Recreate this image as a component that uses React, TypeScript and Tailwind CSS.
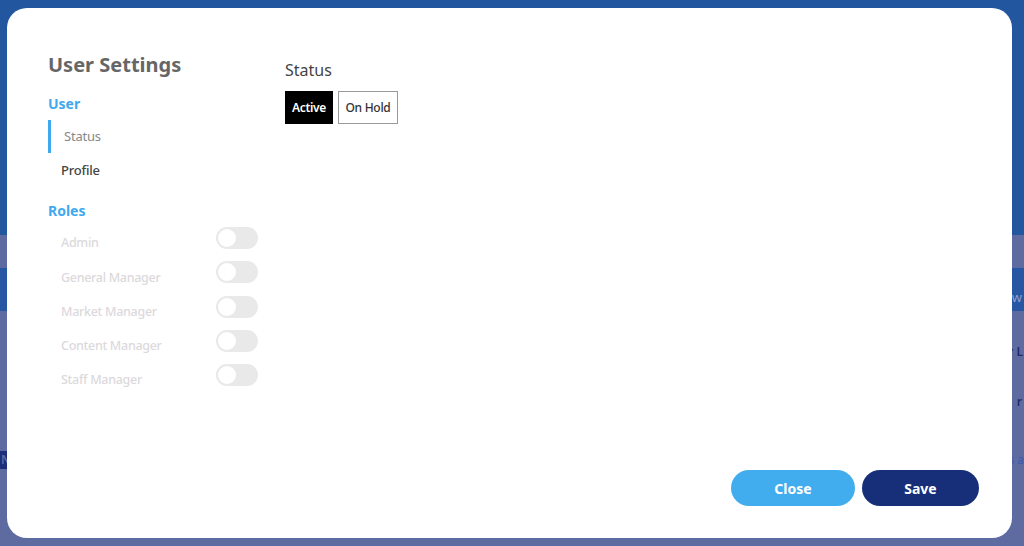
import { useState } from "react";

const roles = ["Admin", "General Manager", "Market Manager", "Content Manager", "Staff Manager"];

function Toggle({ on, onClick }: { on: boolean; onClick: () => void }) {
  return (
    <button
      onClick={onClick}
      className={`mb-[10px] flex h-[22px] w-[42px] items-center rounded-full px-[2px] ${on ? "justify-end bg-[#42adee]" : "justify-start bg-[#e9e9e9]"}`}
    >
      <span className="h-[18px] w-[18px] rounded-full bg-white" />
    </button>
  );
}

export default function App() {
  const [status, setStatus] = useState("active");
  const [enabled, setEnabled] = useState<Record<string, boolean>>({});

  return (
    <div className="relative h-[546px] w-[1024px] overflow-hidden" style={{ fontFamily: '"Noto Sans", sans-serif' }}>
      {/* dimmed page behind */}
      <div className="flex h-full flex-col">
        <div className="h-[235px] bg-[#22569f]" />
        <div className="h-[33px] bg-[#5e6ba1]" />
        <div className="flex h-[43px] items-end justify-end bg-[#2756a3] pb-[4px] pr-[2px] text-[13px] text-[#8aa0d0]">ew</div>
        <div className="flex flex-1 flex-col bg-[#5e6ba1] text-[12px] font-semibold text-[#1d2c6a]">
          <div className="mt-[32px] self-end pr-[1px]">r L</div>
          <div className="mt-[32px] self-end pr-[2px]">r</div>
          <div className="mt-[40px] flex justify-between">
            <span className="bg-[#1b2f7a] px-[1px] text-[#5e6ba1]">N</span>
            <span className="font-normal text-[#3a5aa8]">s a</span>
          </div>
        </div>
      </div>

      {/* modal */}
      <div className="absolute left-[7px] top-[8px] flex h-[530px] w-[1005px] flex-col rounded-[20px] bg-white pl-[41px] pr-[33px] pt-[43px] pb-[32px]">
        <div className="flex flex-1 gap-[27px]">
          <div className="flex w-[210px] flex-col">
            <h1 className="h-[28px] text-[20px] font-bold leading-[28px] text-[#666666]">User Settings</h1>
            <div className="mt-[15px] h-[20px] text-[14px] font-bold leading-[20px] text-[#3fa9ef]">User</div>
            <div className="mt-[6px] flex h-[33px] items-center border-l-[3px] border-[#3fa9ef] pl-[13px] text-[13px] tracking-[-0.2px] text-[#888888]">
              Status
            </div>
            <div className="mt-[1px] flex h-[33px] items-center pl-[13px] text-[13px] font-medium tracking-[-0.2px] text-[#444444]">Profile</div>
            <div className="mt-[14px] h-[20px] text-[14px] font-bold leading-[20px] text-[#3fa9ef]">Roles</div>
            <div className="mt-[5px] flex flex-col">
              {roles.map((r) => (
                <div key={r} className="flex h-[34.3px] items-center justify-between pl-[13px]">
                  <span className="mt-[1px] text-[12.5px] font-medium tracking-[-0.3px] text-[#dcd9dc]">{r}</span>
                  <Toggle on={!!enabled[r]} onClick={() => setEnabled((p) => ({ ...p, [r]: !p[r] }))} />
                </div>
              ))}
            </div>
          </div>

          <div className="flex flex-col">
            <div className="mt-[7px] h-[24px] text-[16px] leading-[24px] text-[#444444]">Status</div>
            <div className="mt-[9px] flex gap-[5px]">
              <button
                onClick={() => setStatus("active")}
                className={`h-[33px] w-[48px] text-[12px] font-semibold tracking-[-0.3px] ${status === "active" ? "bg-black text-white" : "border border-[#9a9a9a] bg-white text-[#333333]"}`}
              >
                Active
              </button>
              <button
                onClick={() => setStatus("hold")}
                className={`h-[33px] w-[60px] text-[12px] font-medium tracking-[-0.3px] ${status === "hold" ? "bg-black text-white" : "border border-[#9a9a9a] bg-white text-[#333333]"}`}
              >
                On Hold
              </button>
            </div>
          </div>
        </div>

        <div className="flex justify-end gap-[7px]">
          <button className="h-[36px] w-[124px] rounded-full bg-[#42adee] text-[14px] font-bold text-white">Close</button>
          <button className="h-[36px] w-[117px] rounded-full bg-[#172f78] text-[14px] font-bold text-white">Save</button>
        </div>
      </div>
    </div>
  );
}
